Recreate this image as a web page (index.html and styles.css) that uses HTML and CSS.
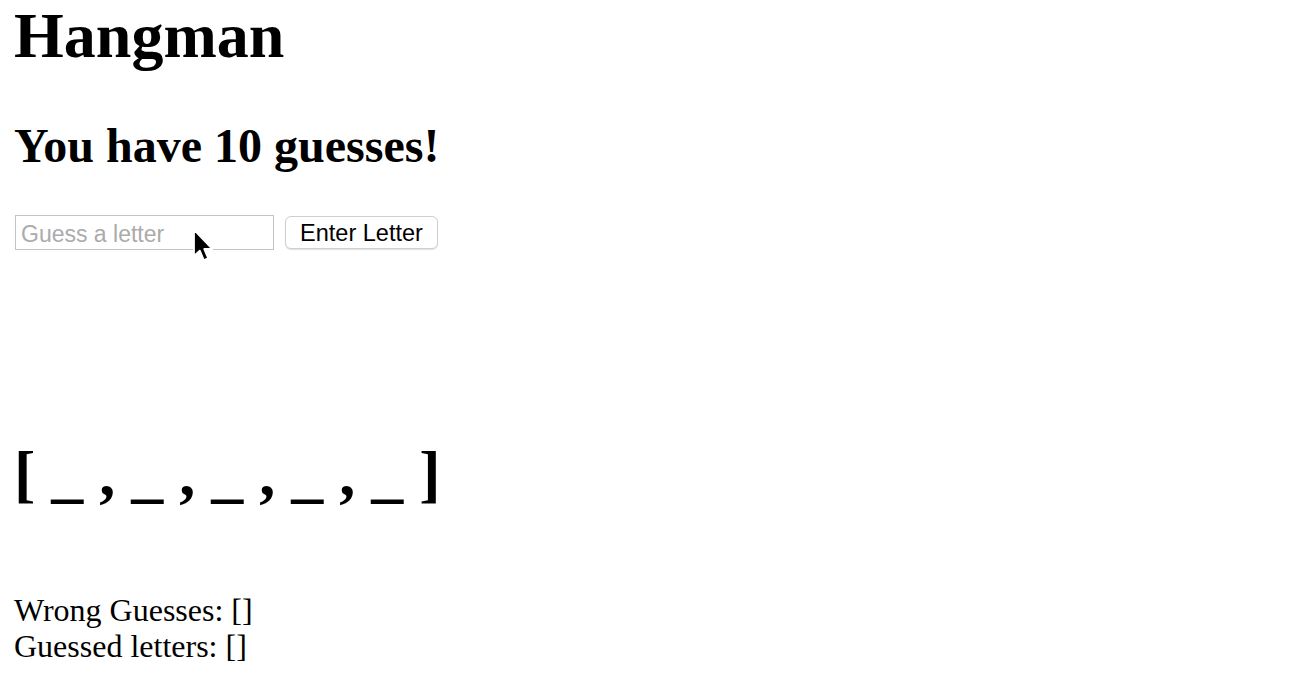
FILE: index.html
```html
<!DOCTYPE html>
<html>
<head>
<meta charset="utf-8">
<title>Hangman</title>
<link rel="stylesheet" href="styles.css">
</head>
<body>
<div class="page">
  <h1 class="title">Hangman</h1>
  <h2 class="guesses">You have 10 guesses!</h2>
  <form class="guess-form">
    <input class="guess-input" type="text" placeholder="Guess a letter">
    <button class="guess-btn" type="button">Enter Letter</button>
  </form>
  <h1 class="word">[ _ , _ , _ , _ , _ ]</h1>
  <div class="lists">
    <div class="list-line">Wrong Guesses: []</div>
    <div class="list-line">Guessed letters: []</div>
  </div>
  <svg class="cursor" width="22" height="34" viewBox="0 0 11 17">
    <path d="M0.5 0.5 L0.5 13.5 L3.4 10.8 L5.4 15.6 L7.6 14.7 L5.6 10 L9.6 10 Z" fill="#000" stroke="#fff" stroke-width="0.9" stroke-linejoin="round"/>
  </svg>
</div>
</body>
</html>
```

FILE: styles.css
```css
html, body {
  margin: 0;
  padding: 0;
  background: #fff;
}

.page {
  position: relative;
  display: flex;
  flex-direction: column;
  align-items: flex-start;
  padding: 0 14px;
  font-family: "Liberation Serif", "Times New Roman", serif;
  color: #000;
}

.title {
  margin: 0;
  font-size: 64px;
  font-weight: bold;
  line-height: 71px;
}

.guesses {
  margin: 48px 0 0;
  font-size: 48px;
  font-weight: bold;
  line-height: 53px;
}

.guess-form {
  margin: 43px 0 0 1px;
  display: flex;
  align-items: center;
  gap: 11px;
}

.guess-input {
  box-sizing: border-box;
  width: 259px;
  height: 35px;
  margin: 0;
  padding: 3px 5px 0;
  border: 1px solid #c4c4c4;
  border-radius: 0;
  font-family: "Liberation Sans", Arial, sans-serif;
  font-size: 23px;
  color: #000;
  outline: none;
}

.guess-input::placeholder {
  color: #ababab;
}

.guess-btn {
  box-sizing: border-box;
  width: 153px;
  height: 33px;
  margin: 0;
  padding: 2px 8px 0;
  background: #fff;
  border: 1px solid #cfcfcf;
  border-radius: 6px;
  box-shadow: 0 1px 1px rgba(0, 0, 0, 0.12);
  font-family: "Liberation Sans", Arial, sans-serif;
  font-size: 23.5px;
  color: #000;
}

.word {
  margin: 188px 0 0;
  font-size: 64px;
  font-weight: bold;
  line-height: 71px;
}

.lists {
  margin-top: 83px;
  font-size: 32px;
  line-height: 36px;
}

.cursor {
  position: absolute;
  left: 193px;
  top: 229px;
}
```
